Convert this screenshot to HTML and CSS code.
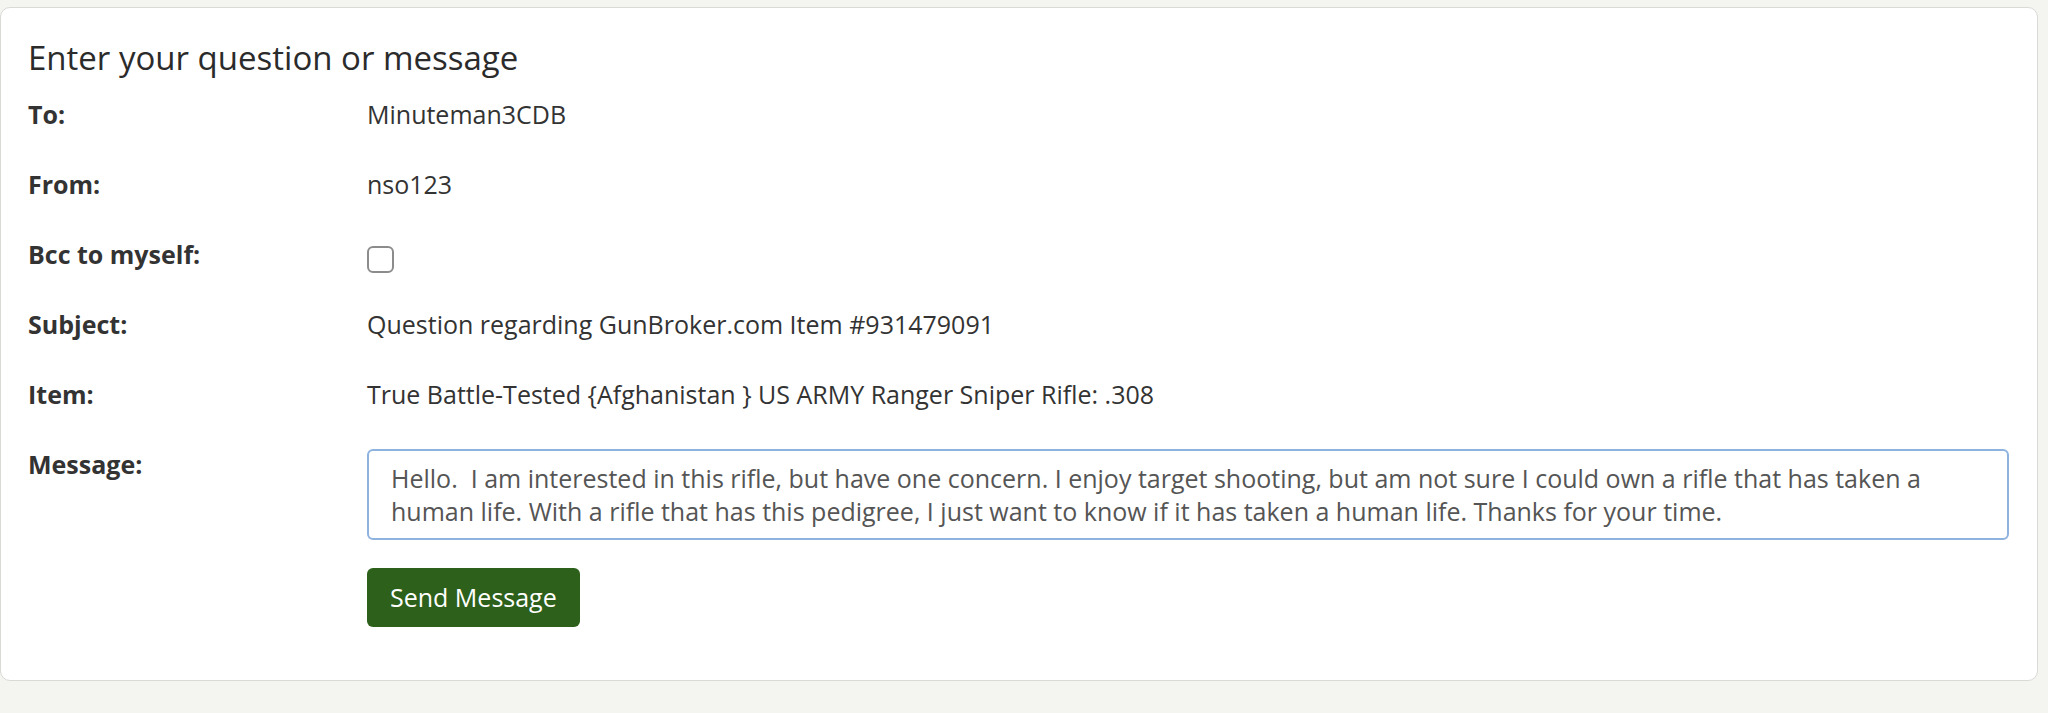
FILE: index.html
```html
<!DOCTYPE html>
<html lang="en">
<head>
  <meta charset="UTF-8">
  <meta name="viewport" content="width=device-width, initial-scale=1.0">
  <title>Send Message</title>
  <link rel="stylesheet" href="styles.css">
</head>
<body>
  <form class="card" id="message-form">
    <h3 class="card-title">Enter your question or message</h3>

    <div class="row">
      <label class="row-label">To:</label>
      <div class="row-value">Minuteman3CDB</div>
    </div>

    <div class="row">
      <label class="row-label">From:</label>
      <div class="row-value">nso123</div>
    </div>

    <div class="row">
      <label class="row-label" for="bcc">Bcc to myself:</label>
      <div class="row-value"><input type="checkbox" id="bcc" class="check"></div>
    </div>

    <div class="row">
      <label class="row-label">Subject:</label>
      <div class="row-value">Question regarding GunBroker.com Item #931479091</div>
    </div>

    <div class="row">
      <label class="row-label">Item:</label>
      <div class="row-value">True Battle-Tested {Afghanistan } US ARMY Ranger Sniper Rifle: .308</div>
    </div>

    <div class="row row-message">
      <label class="row-label" for="message">Message:</label>
      <div class="row-value">
        <textarea id="message" class="message" rows="2">Hello.  I am interested in this rifle, but have one concern. I enjoy target shooting, but am not sure I could own a rifle that has taken a human life. With a rifle that has this pedigree, I just want to know if it has taken a human life. Thanks for your time.</textarea>
        <button type="submit" class="btn-send">Send Message</button>
      </div>
    </div>
  </form>
</body>
</html>
```

FILE: styles.css
```css
body { margin: 0; padding: 7px 10px 0 0; background: #f4f4f1; font-family: "Open Sans", "Liberation Sans", sans-serif; color: #333; }

.card { width: 2038px; box-sizing: border-box; background: #fff; border: 1px solid #d9d9d6; border-radius: 10px; padding: 30px 28px 53px 27px; }
.card-title { margin: 0 0 18px; font-size: 33px; line-height: 40px; font-weight: 500; color: #2b2b2b; }

.row { display: grid; grid-template-columns: 339px 1fr; height: 70px; font-size: 25px; line-height: 36px; }
.row-label { font-weight: 700; }
.row-value { min-width: 0; }

.check { appearance: none; -webkit-appearance: none; margin: 10px 0 0; width: 27px; height: 27px; border: 2px solid #8c8c8c; border-radius: 6px; background: #fff; box-sizing: border-box; }

.row-message { height: auto; }
.message { display: block; box-sizing: border-box; width: 100%; height: 91px; margin-top: 3px; padding: 11px 22px; border: 2px solid #8db3de; border-radius: 6px; font-family: "Open Sans", "Liberation Sans", sans-serif; font-size: 25px; line-height: 33px; color: #555; resize: none; overflow: hidden; outline: none; }

.btn-send { display: block; margin-top: 28px; height: 59px; padding: 0 23px; border: none; border-radius: 6px; background: #2d601a; color: #fff; font-family: "Open Sans", "Liberation Sans", sans-serif; font-size: 25px; line-height: 33px; cursor: pointer; }
```
